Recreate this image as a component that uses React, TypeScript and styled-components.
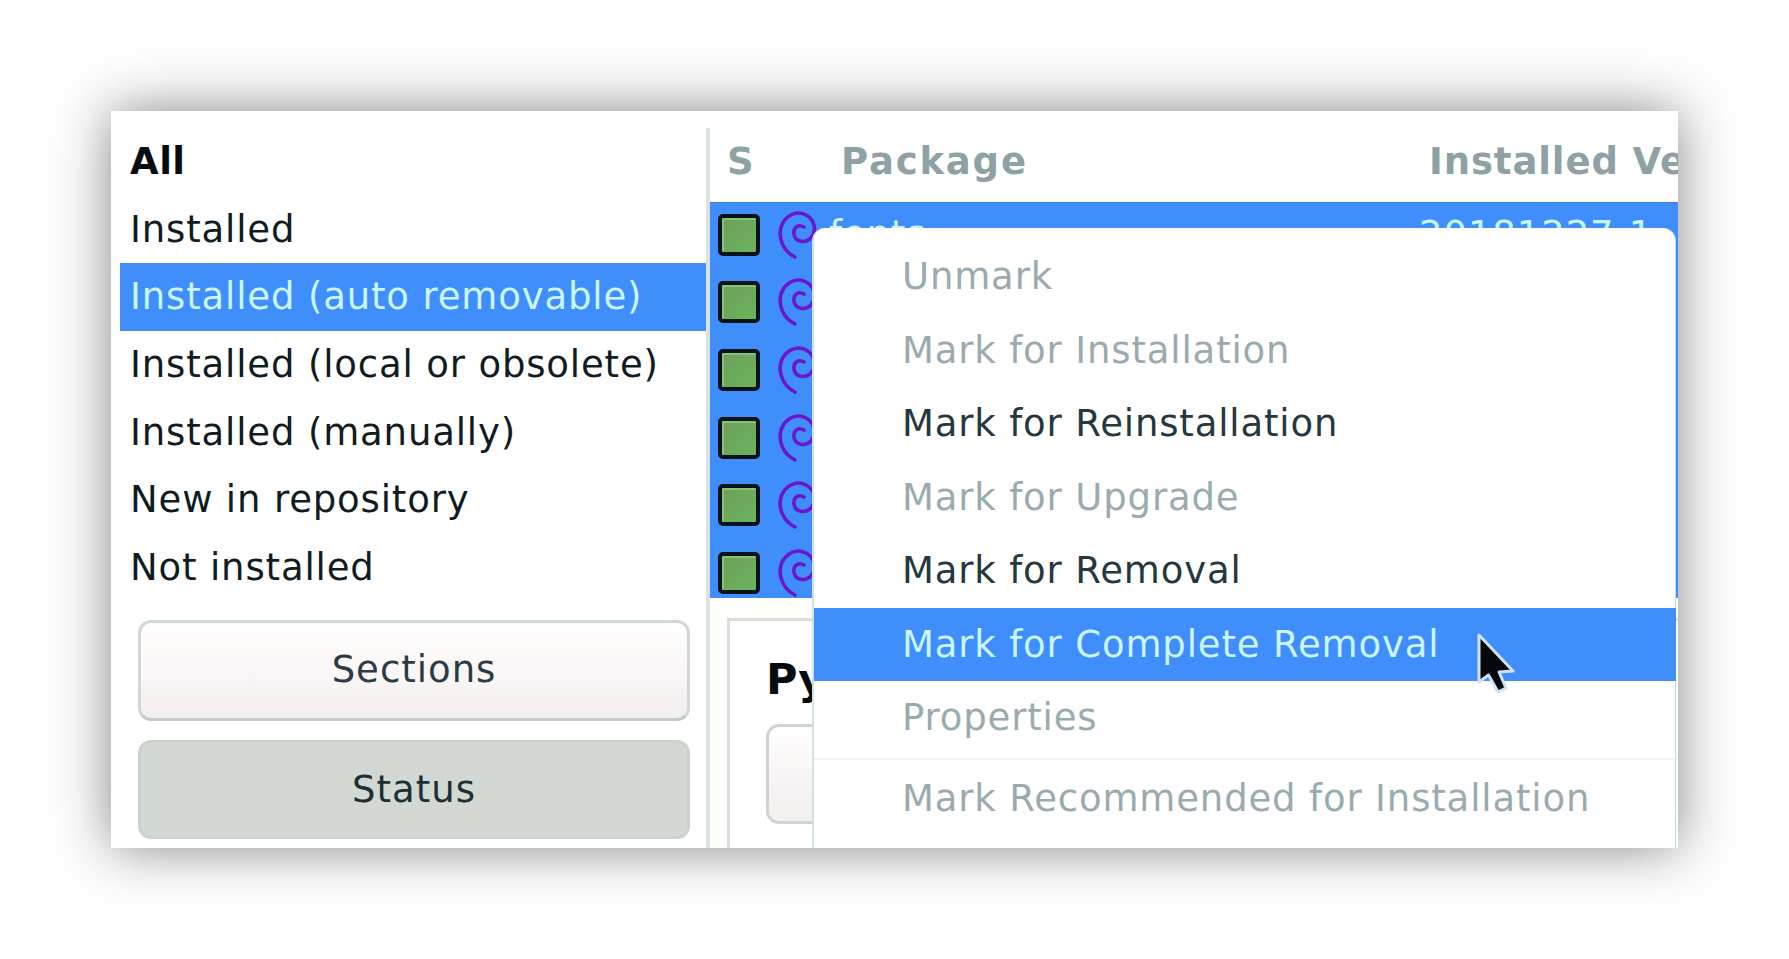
import React from "react";
import styled, { createGlobalStyle, css } from "styled-components";

const Global = createGlobalStyle`
  html, body { margin: 0; padding: 0; background: #fefefe; }
  * { box-sizing: border-box; }
`;

const Page = styled.div`
  width: 1789px;
  height: 959px;
  padding: 111px;
  overflow: hidden;
  background: #fefefe;
  font-family: "DejaVu Sans", sans-serif;
  font-size: 37px;
  letter-spacing: 0.85px;
  color: #101c22;
`;

const Window = styled.div`
  position: relative;
  display: flex;
  width: 1567px;
  height: 737px;
  background: #fff;
  box-shadow: 0 0 52px rgba(0, 0, 0, 0.47);
`;

const Clip = styled.div`
  position: relative;
  display: flex;
  width: 100%;
  height: 100%;
  overflow: hidden;
`;

const Sidebar = styled.div`
  flex: none;
  width: 595px;
  padding: 17px 0 0 9px;
`;

const Filter = styled.div<{ $bold?: boolean; $selected?: boolean }>`
  height: 67.65px;
  padding-left: 10px;
  line-height: 67px;
  white-space: nowrap;
  ${(p) => p.$bold && css`font-weight: 700; color: #050b0e; letter-spacing: 0.5px;`}
  ${(p) => p.$selected && css`background: #3f8efc; color: #c9f6ff;`}
`;

const ModeButton = styled.div<{ $active?: boolean }>`
  width: 552px;
  height: 101px;
  margin: 19px 0 0 18px;
  border: 3px solid #ced8d5;
  border-bottom-color: #c3cbc9;
  border-radius: 13px;
  background: linear-gradient(#fffefd, #fbf6f7 55%, #f2eeed);
  color: #2b3c44;
  line-height: 94px;
  text-align: center;
  letter-spacing: 1px;
  ${(p) =>
    p.$active &&
    css`
      height: 99px;
      border-color: #cbd3cc;
      background: #d3d8d3;
      color: #1d3036;
    `}
`;

const Main = styled.div`
  flex: 1;
  min-width: 0;
  margin-top: 17px;
  border-left: 4px solid #dae3e1;
`;

const Header = styled.div`
  display: flex;
  height: 74px;
  line-height: 68px;
  font-weight: 700;
  color: #8ea1a4;
  white-space: nowrap;
`;

const Col = styled.div<{ $w: number; $ls?: number }>`
  flex: none;
  width: ${(p) => p.$w}px;
  letter-spacing: ${(p) => p.$ls ?? 0.9}px;
`;

const Rows = styled.div`
  height: 396px;
  overflow: hidden;
  background: #3f8efc;
  border-top: 1px solid #3a86d8;
`;

const Row = styled.div`
  display: flex;
  align-items: center;
  height: 67.6px;
  padding-left: 8px;
  color: #c9f6ff;
  white-space: nowrap;
  &:first-child { margin-top: -2px; }
`;

const Status = styled.span`
  flex: none;
  width: 42px;
  height: 42px;
  border: 4px solid #06121c;
  border-radius: 5px;
  background: linear-gradient(135deg, #6f9f5c, #69b35c);
  box-shadow: inset 2px 2px 0 #86c278;
`;

const Swirl = styled.svg`
  flex: none;
  width: 40px;
  height: 48px;
  margin-left: 17px;
`;

const Details = styled.div`
  height: 260px;
  padding: 20px 0 0 17px;
  background: #fffffb;
`;

const Panel = styled.div`
  height: 260px;
  padding: 33px 0 0 36px;
  border: solid #d8dedc;
  border-width: 3px 0 0 3px;
  background: #fff;
`;

const Title = styled.div`
  height: 70px;
  line-height: 50px;
  font-size: 43px;
  font-weight: 700;
  letter-spacing: 0;
  color: #050b0e;
`;

const PanelButton = styled.div`
  width: 300px;
  height: 100px;
  border: 3px solid #ccd5d3;
  border-radius: 13px;
  background: linear-gradient(#fffefd, #f8f3f4 60%, #f2efed);
`;

const Menu = styled.div`
  position: absolute;
  left: 701px;
  top: 117px;
  width: 864px;
  height: 640px;
  padding-top: 12px;
  border-left: 2px solid #d3e0e4;
  border-right: 1px solid #b5e2ea;
  border-radius: 13px 13px 0 0;
  background: #fff;
`;

const Item = styled.div<{ $tone?: "off" | "hot" }>`
  height: 73.6px;
  padding-left: 88px;
  line-height: 73px;
  white-space: nowrap;
  color: #26383f;
  ${(p) => p.$tone === "off" && css`color: #9aabaf;`}
  ${(p) => p.$tone === "hot" && css`height: 73px; background: #3f8efc; color: #c9f6ff; margin-right: -1px;`}
`;

const Separator = styled.div`
  height: 2px;
  margin: 3px 0 2px;
  background: #f1f2f2;
`;

const Pointer = styled.svg`
  position: absolute;
  left: 1364px;
  top: 518px;
  width: 46px;
  height: 68px;
`;

const filters = [
  "All",
  "Installed",
  "Installed (auto removable)",
  "Installed (local or obsolete)",
  "Installed (manually)",
  "New in repository",
  "Not installed",
];

const packages = [
  { name: "fonts-", version: "20181227-1" },
  { name: "", version: "" },
  { name: "", version: "" },
  { name: "", version: "" },
  { name: "", version: "" },
  { name: "", version: "" },
];

export default function App() {
  return (
    <Page>
      <Global />
      <Window>
        <Clip>
          <Sidebar>
            {filters.map((f, i) => (
              <Filter key={f} $bold={i === 0} $selected={i === 2}>
                {f}
              </Filter>
            ))}
            <ModeButton>Sections</ModeButton>
            <ModeButton $active>Status</ModeButton>
          </Sidebar>
          <Main>
            <Header>
              <Col $w={17} />
              <Col $w={114}>S</Col>
              <Col $w={588} $ls={1.8}>Package</Col>
              <Col $w={300}>Installed Version</Col>
            </Header>
            <Rows>
              {packages.map((p, i) => (
                <Row key={i}>
                  <Status />
                  <Swirl viewBox="0 0 40 48">
                    <path
                      d="M18 46C6 40 1 27 4 16C8 4 20 -1 29 4C38 9 40 20 34 27C28 33 18 31 17 23C16 16 22 13 27 16"
                      fill="none"
                      stroke="#6a16cf"
                      strokeWidth="3.6"
                      strokeLinecap="round"
                    />
                  </Swirl>
                  <Col $w={12} />
                  <Col $w={590}>{p.name}</Col>
                  <Col $w={300}>{p.version}</Col>
                </Row>
              ))}
            </Rows>
            <Details>
              <Panel>
                <Title>Python</Title>
                <PanelButton />
              </Panel>
            </Details>
          </Main>
          <Menu>
            <Item $tone="off">Unmark</Item>
            <Item $tone="off">Mark for Installation</Item>
            <Item>Mark for Reinstallation</Item>
            <Item $tone="off">Mark for Upgrade</Item>
            <Item>Mark for Removal</Item>
            <Item $tone="hot">Mark for Complete Removal</Item>
            <Item $tone="off">Properties</Item>
            <Separator />
            <Item $tone="off">Mark Recommended for Installation</Item>
          </Menu>
          <Pointer viewBox="0 0 46 68">
            <path
              d="M4 6L4 53L13.500 46L23 63L31 59L24 43L38 42Z"
              fill="#06080b"
              stroke="#cfe2f5"
              strokeWidth="3"
              strokeLinejoin="round"
            />
          </Pointer>
        </Clip>
      </Window>
    </Page>
  );
}
